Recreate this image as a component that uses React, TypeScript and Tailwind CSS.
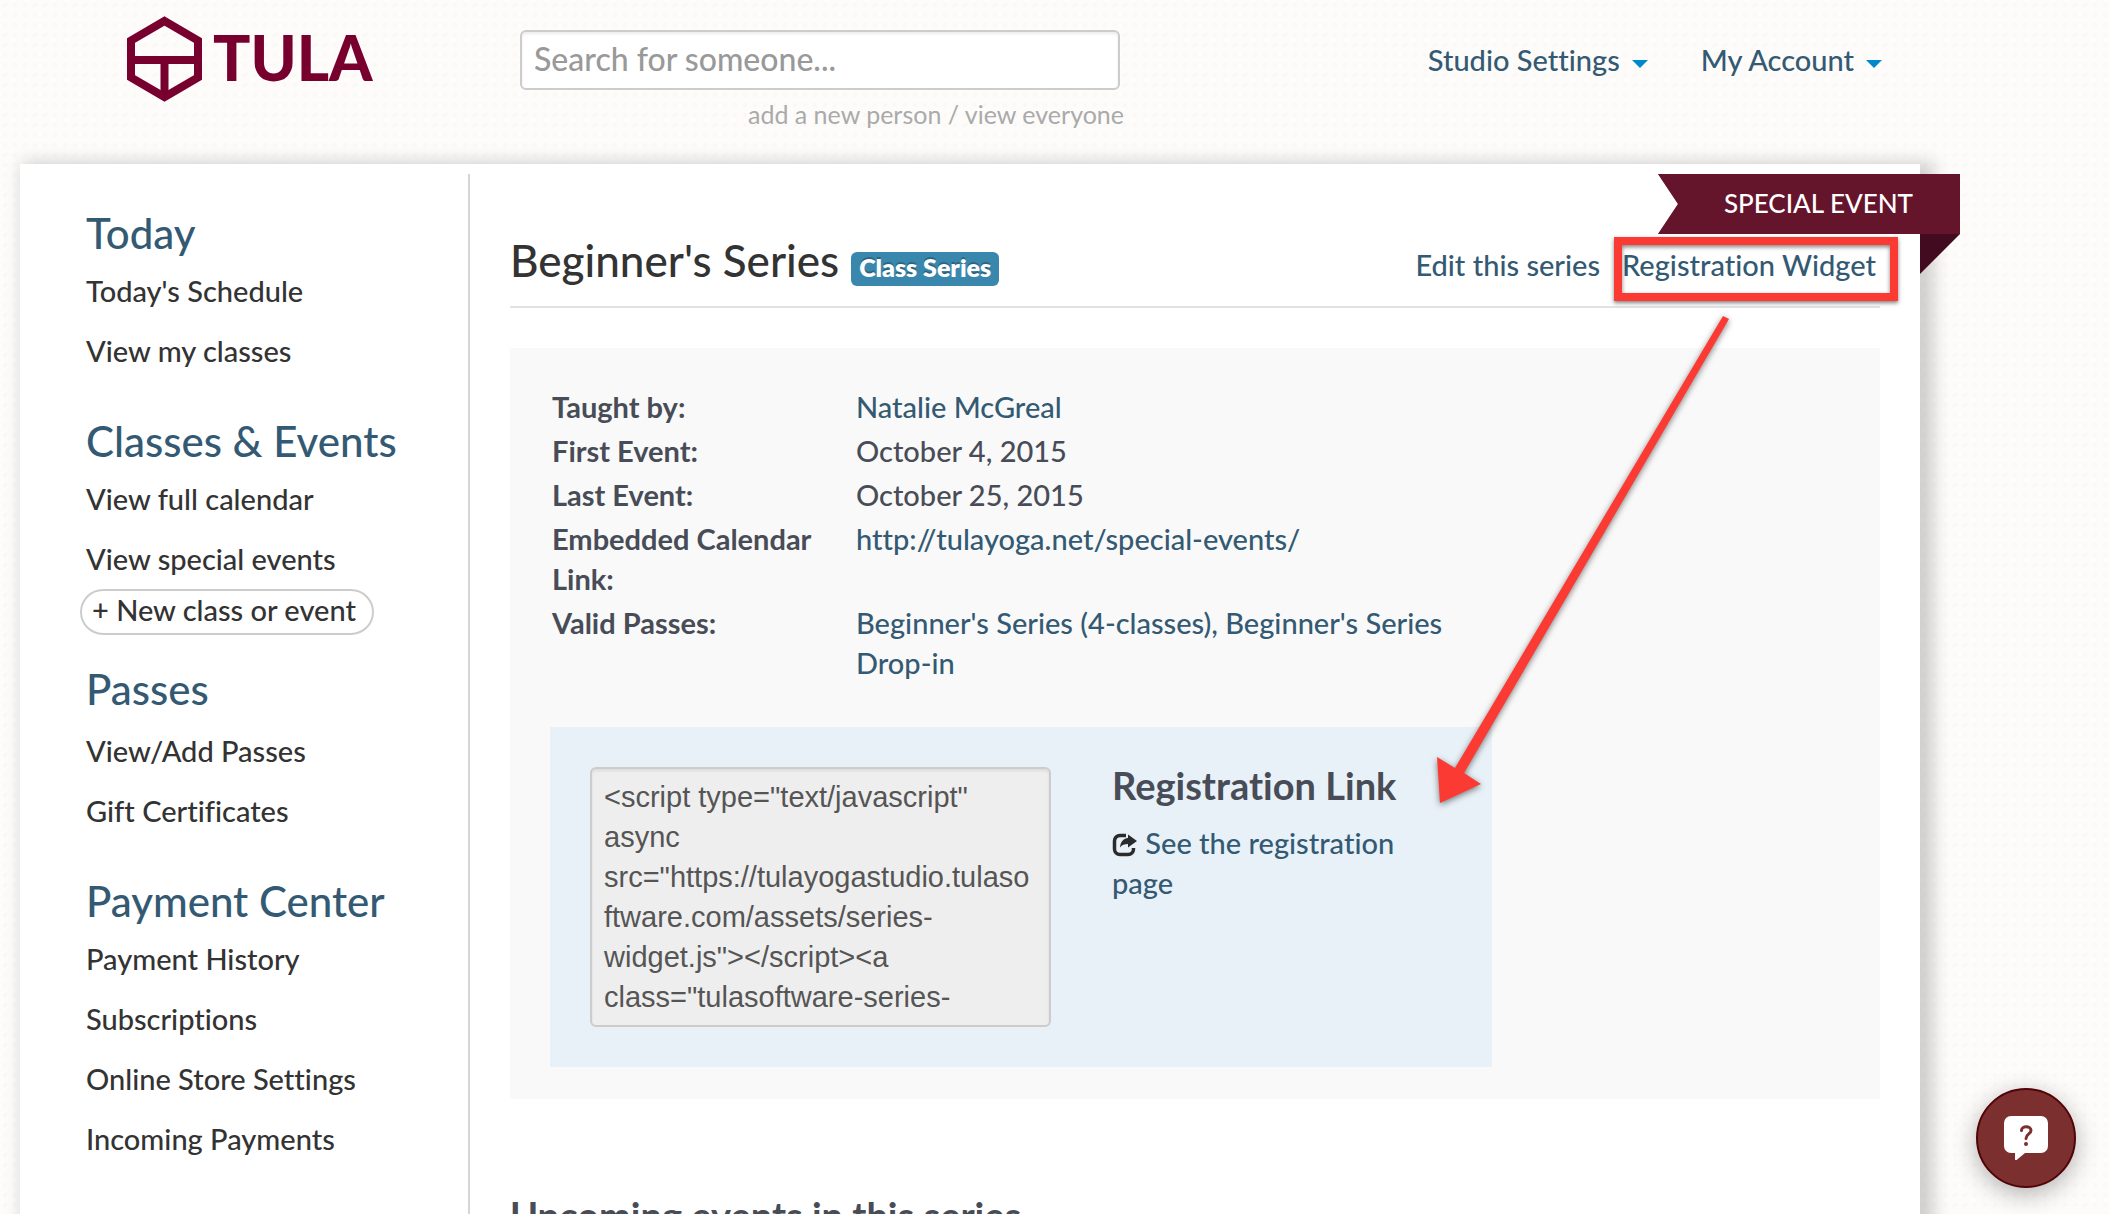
import { ReactNode } from 'react';
import clsx from 'clsx';

const SCRIPT_SNIPPET = `<script type="text/javascript" async src="https://tulayogastudio.tulasoftware.com/assets/series-widget.js"></script><a class="tulasoftware-series-registration" href="#">Register</a>`;

type NavSection = {
  title: string;
  links: string[];
  action?: string;
};

const SECTIONS: NavSection[] = [
  { title: 'Today', links: ["Today's Schedule", 'View my classes'] },
  {
    title: 'Classes & Events',
    links: ['View full calendar', 'View special events'],
    action: '+ New class or event',
  },
  { title: 'Passes', links: ['View/Add Passes', 'Gift Certificates'] },
  {
    title: 'Payment Center',
    links: [
      'Payment History',
      'Subscriptions',
      'Online Store Settings',
      'Incoming Payments',
    ],
  },
];

export default function App() {
  return (
    <div className="flex h-screen flex-col overflow-hidden bg-[#fdfcfa] bg-[radial-gradient(#f9f8f5_1px,transparent_3px)] bg-[size:10px_10px] font-['Lato',sans-serif] text-[29px] leading-10 font-medium text-[#333] [font-variant-ligatures:none]">
      <Header />
      <div className="relative mr-[190px] ml-5 flex flex-1 bg-white pt-2.5 shadow-[8px_4px_16px_6px_rgba(0,0,0,0.18)]">
        <Sidebar />
        <Main />
      </div>
      <HelpButton />
    </div>
  );
}

function Header() {
  return (
    <header className="flex h-[164px] shrink-0 items-start pr-[228px] pl-[127px]">
      <a href="#" aria-label="Tula" className="mt-4 flex w-[393px] gap-[11px]">
        <svg width="75" height="86" viewBox="0 0 75 86" fill="none" stroke="#78002e" strokeWidth="8">
          <path d="M37.5 5 71 24.500v37L37.500 81 4 61.500v-37z" />
          <path d="M4 44h67M37.500 44v37" />
        </svg>
        <span className="text-[62px] leading-[82px] font-black text-[#78002e]">TULA</span>
      </a>

      <div className="mt-[30px] flex w-[604px] flex-col">
        <input
          type="search"
          aria-label="Search for someone"
          placeholder="Search for someone..."
          className="h-[60px] w-[600px] rounded-md border-2 border-[#ccc] bg-white px-3 pb-1 text-[32px] shadow-[inset_0_2px_3px_rgba(0,0,0,0.08)] placeholder:text-[#999]"
        />
        <p className="mt-1 text-right text-[25px] leading-10 font-normal text-[#aaa]">
          <a href="#">add a new person</a> / <a href="#">view everyone</a>
        </p>
      </div>

      <nav className="mt-10 ml-auto flex gap-[53px] text-[#345a73]">
        <MenuButton>Studio Settings</MenuButton>
        <MenuButton>My Account</MenuButton>
      </nav>
    </header>
  );
}

function MenuButton({ children }: { children: ReactNode }) {
  return (
    <button type="button" className="flex items-center gap-3">
      {children}
      <svg width="16" height="8" viewBox="0 0 16 8" className="mt-2" fill="#08c">
        <path d="M0 0h16L8 8z" />
      </svg>
    </button>
  );
}

function Sidebar() {
  return (
    <nav className="flex w-[450px] shrink-0 flex-col border-r-2 border-[#d5d5d5] pt-[39px] pl-[66px]">
      {SECTIONS.map((section) => (
        <section key={section.title} className={section.action ? 'mb-[34px]' : 'mb-10'}>
          <h2
            className={clsx(
              'text-[42px] leading-10 text-[#345a73]',
              section.title === 'Passes' ? 'mb-3' : 'mb-2',
            )}
          >
            {section.title}
          </h2>
          <ul>
            {section.links.map((link) => (
              <li key={link} className="leading-[60px]">
                <a href="#">{link}</a>
              </li>
            ))}
          </ul>
          {section.action && (
            <button
              type="button"
              className="-ml-1.5 flex h-[46px] rounded-full border-2 border-[#ccc] pr-4 pl-2.5 leading-[38px]"
            >
              {section.action}
            </button>
          )}
        </section>
      ))}
    </nav>
  );
}

function Main() {
  return (
    <main className="relative min-w-0 flex-1 pr-10 pl-10">
      <Ribbon />
      <div className="mt-[62px] flex h-[72px] items-start border-b-2 border-[#e2e2e2]">
        <h1 className="text-[44px] leading-[48px] font-medium">Beginner's Series</h1>
        <span className="mt-4 ml-3 h-[34px] rounded-md bg-[#3a87ad] px-2 text-[25px] leading-[30px] font-extrabold text-white [text-shadow:0_-2px_0_rgba(0,0,0,0.25)]">
          Class Series
        </span>
        <div className="mt-[9px] ml-auto flex gap-[22px] pr-1 text-[#345a73]">
          <a href="#">Edit this series</a>
          <a href="#" className="relative">
            Registration Widget
            <span className="absolute -top-2 -right-[22px] -left-2 h-16 border-8 border-[#fb3a33] shadow-[0_2px_4px_rgba(0,0,0,0.5),inset_0_2px_4px_rgba(0,0,0,0.5)]" />
          </a>
        </div>
      </div>

      <section className="mt-10 bg-[#f9f9f9] px-10 pt-[39px] pb-8">
        <dl className="grid max-w-[904px] grid-cols-[275px_1fr] gap-x-[29px] gap-y-1 pl-0.5 text-[#345a73]">
          <Detail label="Taught by:">
            <a href="#">Natalie McGreal</a>
          </Detail>
          <Detail label="First Event:">
            <span className="text-[#484c57]">October 4, 2015</span>
          </Detail>
          <Detail label="Last Event:">
            <span className="text-[#484c57]">October 25, 2015</span>
          </Detail>
          <Detail label="Embedded Calendar Link:">
            <a href="#">http://tulayoga.net/special-events/</a>
          </Detail>
          <Detail label="Valid Passes:">
            <a href="#">Beginner's Series (4-classes)</a>, <a href="#">Beginner's Series Drop-in</a>
          </Detail>
        </dl>

        <div className="mt-11 flex w-[942px] gap-[61px] bg-[#e8f1f8] p-10">
          <textarea
            readOnly
            aria-label="Widget code"
            value={SCRIPT_SNIPPET}
            className="h-[260px] w-[461px] resize-none overflow-hidden rounded-md border-2 border-[#ccc] bg-[#eee] py-2 pr-4 pl-3 font-['Liberation_Sans',sans-serif] leading-10 font-normal text-[#555] shadow-[inset_0_2px_3px_rgba(0,0,0,0.08)]"
          />
          <div className="w-[300px]">
            <h3 className="text-[38px] leading-9 font-bold text-[#484c57]">Registration Link</h3>
            <p className="mt-5 text-[#345a73]">
              <a href="#">
                <ShareIcon /> See the registration page
              </a>
            </p>
          </div>
        </div>
      </section>

      <h2 className="mt-[89px] text-[38px] leading-[54px] font-bold text-[#484c57]">
        Upcoming events in this series
      </h2>

      {/* Pointer from the widget link down to the registration link */}
      <svg
        width="300"
        height="500"
        viewBox="0 0 300 500"
        fill="#fb3a33"
        className="pointer-events-none absolute top-[136px] right-[187px] drop-shadow-[0_2px_3px_rgba(0,0,0,0.5)]"
      >
        <path d="M290 6 296 9 31 463 48 474 7 493 4 447 22 458z" />
      </svg>
    </main>
  );
}

function Ribbon() {
  return (
    <div className="absolute top-0 -right-10">
      <div className="h-[60px] bg-[#65152b] pr-[47px] pl-[66px] text-[26px] leading-[58px] text-white [clip-path:polygon(0_0,100%_0,100%_100%,0_100%,20px_50%)]">
        SPECIAL EVENT
      </div>
      <div className="ml-auto h-10 w-10 bg-[#420b1f] [clip-path:polygon(0_0,100%_0,0_100%)]" />
    </div>
  );
}

function Detail({ label, children }: { label: string; children: ReactNode }) {
  return (
    <>
      <dt className="font-bold text-[#484c57]">{label}</dt>
      <dd>{children}</dd>
    </>
  );
}

function ShareIcon() {
  return (
    <svg width="26" height="24" viewBox="0 0 26 24" className="mb-1 inline-block" fill="none">
      <path
        d="M14 2.5H8A5.5 5.5 0 0 0 2.500 8v8A5.500 5.500 0 0 0 8 21.500h8A5.500 5.500 0 0 0 21.500 16v-1"
        stroke="#2b2b2b"
        strokeWidth="3.500"
      />
      <path d="M16 1.500 25 8l-9 6.500V11c-3.500 0-6 .8-8 3.500C8.500 9 11 5.500 16 5z" fill="#2b2b2b" />
    </svg>
  );
}

function HelpButton() {
  return (
    <button
      type="button"
      aria-label="Help"
      className="fixed right-[34px] bottom-[26px] flex h-[100px] w-[100px] items-center justify-center rounded-full border-2 border-[#500508] bg-[#7c2f2f] shadow-[0_6px_24px_rgba(0,0,0,0.3)]"
    >
      <svg width="44" height="44" viewBox="0 0 44 44">
        <path
          d="M7 0h30a7 7 0 0 1 7 7v23a7 7 0 0 1-7 7H21L12 44.500Q11 45 11 43.500V37H7a7 7 0 0 1-7-7V7a7 7 0 0 1 7-7z"
          fill="#fff"
        />
        <path
          d="M17.500 14.500c0-5 9.500-5 9.500 0 0 3.500-5 3.500-5 8"
          fill="none"
          stroke="#7c2f2f"
          strokeWidth="3"
          strokeLinecap="round"
        />
        <circle cx="22" cy="28" r="2" fill="#7c2f2f" />
      </svg>
    </button>
  );
}
